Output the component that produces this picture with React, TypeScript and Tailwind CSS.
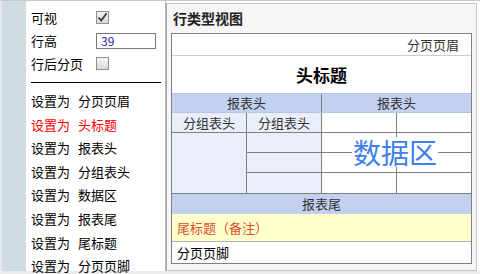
import React from 'react';

const FONT = { fontFamily: '"Noto Sans CJK SC", "Noto Sans", sans-serif' };

// ==========================================
// LEFT PROPERTY PANEL
// ==========================================
const setItems = ['分页页眉', '头标题', '报表头', '分组表头', '数据区', '报表尾', '尾标题', '分页页脚'];

function CheckBox({ checked = false }: { checked?: boolean }) {
  return (
    <div className="w-[13px] h-[13px] border border-[#8e8f8f] bg-gradient-to-b from-[#f4f4f4] to-[#dcdcdc] flex items-center justify-center">
      {checked && (
        <svg width="11" height="11" viewBox="0 0 11 11">
          <path d="M1.5 5.5 L4.2 8.6 L9.6 1.2" fill="none" stroke="#3a3a3a" strokeWidth="1.8" />
        </svg>
      )}
    </div>
  );
}

function PropertyPanel() {
  return (
    <div className="w-[140px] h-full bg-white border-r border-[#b4b4b4] pl-[5px] pt-[5px] text-[13px] text-black">
      <div className="h-[23px] flex items-center">
        <span className="w-[65px]">可视</span>
        <CheckBox checked />
      </div>
      <div className="h-[23px] flex items-center">
        <span className="w-[65px]">行高</span>
        <div className="w-[60px] h-[16px] border border-[#7a7a7a] flex items-center pl-[4px] text-[12px] text-[#22229a]">39</div>
      </div>
      <div className="h-[23px] flex items-center">
        <span className="w-[65px]">行后分页</span>
        <CheckBox />
      </div>
      <div className="mt-[7px] w-[130px] border-t border-black" />
      <div className="mt-[11px] flex flex-col gap-[9.6px]">
        {setItems.map((it) => (
          <div
            key={it}
            className={`h-[14px] leading-[14px] flex gap-[8px] ${it === '头标题' ? 'text-[#ff0000]' : ''}`}
          >
            <span>设置为</span>
            <span>{it}</span>
          </div>
        ))}
      </div>
    </div>
  );
}

// ==========================================
// ROW TYPE VIEW
// ==========================================
function RowTypeView() {
  return (
    <div className="flex-1 h-full bg-[#f6f6f6] border border-[#c4c4c4] border-l-[#a9a9a9] pl-[4px] pr-[2px] flex flex-col">
      <div className="h-[29px] flex items-center pl-[2px] text-[14px] font-bold text-[#222]">行类型视图</div>
      <div className="w-[301px] border border-[#808080] bg-white text-[13px] text-[#333] flex flex-col">
        <div className="h-[22px] border-b border-[#c5cce6] flex items-center justify-end pr-[12px]">分页页眉</div>
        <div className="h-[37px] flex items-center justify-center text-[17px] font-bold text-black">头标题</div>
        <div className="h-[20px] bg-[#c3d1f0] border-t border-[#b8c4e6] border-b border-[#808080] flex">
          <div className="w-[150px] border-r border-[#808080] flex items-center justify-center">报表头</div>
          <div className="flex-1 flex items-center justify-center">报表头</div>
        </div>
        <div className="relative grid grid-cols-[75px_75px_75px_74px] grid-rows-[20px_20px_20px_20px]">
          <div className="border-r border-b border-[#808080] bg-[#eaeef9] flex items-center justify-center">分组表头</div>
          <div className="border-r border-b border-[#808080] bg-[#eaeef9] flex items-center justify-center">分组表头</div>
          <div className="border-r border-b border-[#808080]" />
          <div className="border-b border-[#808080]" />
          <div className="row-span-3 border-r border-[#808080] bg-[#eaeef9]" />
          <div className="border-r border-b border-[#808080] bg-[#eaeef9]" />
          <div className="border-r border-b border-[#808080]" />
          <div className="border-b border-[#808080]" />
          <div className="border-r border-b border-[#808080] bg-[#eaeef9]" />
          <div className="border-r border-b border-[#808080]" />
          <div className="border-b border-[#808080]" />
          <div className="border-r border-[#808080] bg-[#eaeef9]" />
          <div className="border-r border-[#808080]" />
          <div />
          <div className="absolute left-[180px] top-[24px] bg-white px-[1px] leading-[30px] text-[28px] text-[#3d80ea]">数据区</div>
        </div>
        <div className="h-[21px] bg-[#c3d1f0] border-t border-[#808080] flex items-center justify-center">报表尾</div>
        <div className="h-[28px] bg-[#ffffcc] border-b border-[#b4b4b4] flex items-center pl-[5px] text-[#e0502c]">尾标题（备注）</div>
        <div className="h-[21px] flex items-center pl-[5px] text-black">分页页脚</div>
      </div>
    </div>
  );
}

export default function App() {
  return (
    <div className="w-[480px] h-[274px] bg-[#ececec] border-t border-[#c8c8c8] pb-[3px] flex" style={FONT}>
      <div className="w-[26px] h-full bg-[#cfdde2] border-l-[2px] border-[#e4e8ea]" />
      <PropertyPanel />
      <div className="pt-[2px] pr-[3px] flex-1 h-full flex bg-white">
        <RowTypeView />
      </div>
    </div>
  );
}
